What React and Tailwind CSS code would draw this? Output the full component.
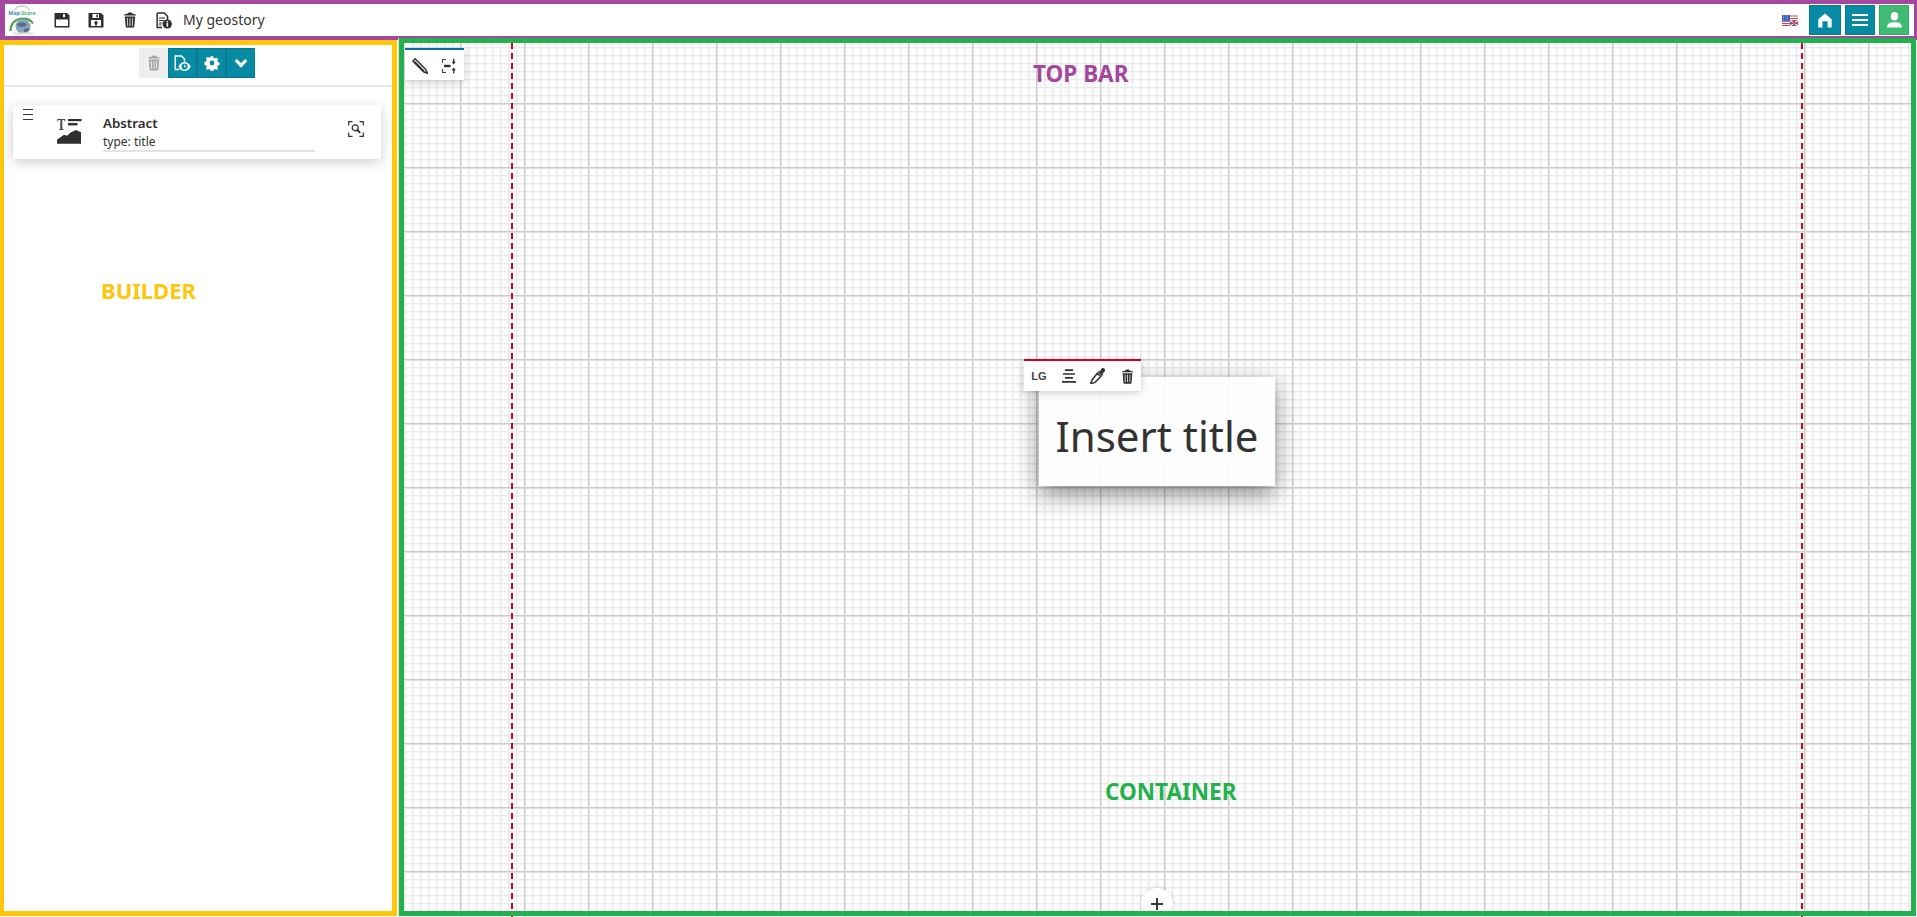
const D = "#2f2f2f";

const Save = ({ up }) => (
  <svg width="16" height="16" viewBox="0 0 16 16">
    <path d="M0.5 1h12.5l2.5 2.5V15.5H0.5z" fill={D} />
    {up ? (
      <>
        <rect x="3" y="8" width="10" height="6" fill="#fff" />
        <path d="M8 8.600l2.400 2.600H9v2.200H7v-2.200H5.600z" fill={D} />
        <rect x="4.500" y="2" width="6.500" height="4" fill="#fff" />
        <rect x="8.400" y="2.600" width="1.600" height="2.800" fill={D} />
      </>
    ) : (
      <>
        <rect x="2" y="7.500" width="12" height="6.500" fill="#fff" />
        <rect x="9" y="2.200" width="2" height="3" fill="#fff" />
      </>
    )}
  </svg>
);

const Trash = ({ color = D, size = 16 }) => (
  <svg width={size} height={size} viewBox="0 0 16 16">
    <path d="M5.600 1.800C5.800.7 6.400.4 8 .4s2.200.3 2.400 1.400l2.800.5c.5.1.7.5.7 1.200H2.100c0-.7.2-1.100.7-1.200z" fill={color} />
    <path d="M2.800 4.400h10.400l-.9 10.400c0 .5-.4.8-.9.8H4.600c-.5 0-.9-.3-.9-.8z" fill={color} />
    <path d="M5.300 6l.4 8M8 6v8M10.700 6l-.4 8" stroke="#fff" strokeWidth="1" opacity=".8" fill="none" />
  </svg>
);

const FileInfo = () => (
  <svg width="16" height="17" viewBox="0 0 16 17">
    <path d="M1.200 1h7l3.300 3.300V8M6 15.500H1.200V1" fill="none" stroke={D} strokeWidth="1.500" />
    <path d="M3 6h6M3 8.500h5M3 11h3.500M3 13h2.500" stroke={D} strokeWidth="1.100" />
    <circle cx="11.300" cy="12" r="4.600" fill={D} />
    <rect x="10.600" y="11" width="1.500" height="3.600" fill="#fff" />
    <rect x="10.600" y="9" width="1.500" height="1.400" fill="#fff" />
  </svg>
);

const FileEye = () => (
  <svg width="17" height="17" viewBox="0 0 17 17">
    <path d="M5.500 14.500H1.300V1h6.200l3 3v2.600" fill="none" stroke="#fff" strokeWidth="1.500" />
    <path d="M4.400 11.500C6 8.400 8.200 6.900 10.600 6.900s4.600 1.500 6.200 4.600c-1.600 3.100-3.800 4.600-6.200 4.600s-4.600-1.500-6.200-4.600z" fill="#fff" />
    <circle cx="10.600" cy="11.500" r="3.100" fill="#078aa3" />
    <path d="M10.600 9.800v1.900h1.700" stroke="#fff" strokeWidth="1" fill="none" />
  </svg>
);

const Gear = () => (
  <svg width="16" height="16" viewBox="0 0 16 16">
    <path d="M6.600.5h2.800l.4 2 1.300.6 1.800-1.100 2 2-1.100 1.800.6 1.300 2 .4v2.800l-2 .4-.6 1.300 1.100 1.800-2 2-1.800-1.100-1.300.6-.4 2H6.600l-.4-2-1.300-.6-1.800 1.100-2-2 1.100-1.800-.6-1.300-2-.4V6.600l2-.4.6-1.300L1.100 3.100l2-2 1.800 1.100 1.300-.6z" transform="translate(.8 .8) scale(.9)" fill="#fff" />
    <circle cx="8" cy="8" r="2.400" fill="#078aa3" />
  </svg>
);

const Chevron = () => (
  <svg width="14" height="14" viewBox="0 0 14 14">
    <path d="M1.800 4l5.200 5.400L12.200 4" fill="none" stroke="#fff" strokeWidth="3.200" />
  </svg>
);

const Home = () => (
  <svg width="14" height="15" viewBox="0 0 14 15">
    <path d="M7 .5l6.700 5.800v8.200H9.600V8.200H4.400v6.300H.3V6.300z" fill="#fff" />
  </svg>
);

const Menu = () => (
  <svg width="16" height="12" viewBox="0 0 16 12">
    <path d="M0 1h16M0 6h16M0 11h16" stroke="#fff" strokeWidth="2" />
  </svg>
);

const User = () => (
  <svg width="15" height="16" viewBox="0 0 15 16">
    <ellipse cx="7.500" cy="4.300" rx="3.700" ry="4.200" fill="#fff" />
    <path d="M0 15.500c0-3 2.200-5 5-5.200h5c2.800.2 5 2.200 5 5.200z" fill="#fff" />
  </svg>
);

const Flag = () => (
  <svg width="16" height="11" viewBox="0 0 16 11">
    <rect width="16" height="11" fill="#fff" />
    <path d="M0 1h16M0 3.500h16M0 6h16M0 8.500h16M0 10.500h16" stroke="#d8404a" strokeWidth="1" />
    <rect width="8" height="6.500" fill="#3558b0" />
    <path d="M1 1h6M1 3h6M1 5h6" stroke="#c8d4f0" strokeWidth=".8" strokeDasharray="1 1" />
    <rect x="8" y="5.500" width="8" height="5.500" fill="#2c4a9c" />
    <path d="M8 5.500l8 5.500M16 5.500l-8 5.500" stroke="#fff" strokeWidth="1.200" />
    <path d="M12 5.500V11M8 8.200h8" stroke="#d8404a" strokeWidth="1.200" />
  </svg>
);

const Logo = () => (
  <div className="relative w-[28px] h-[30px] shrink-0">
    <svg className="absolute inset-0" width="28" height="30" viewBox="0 0 28 30">
      <path d="M6 6C8 2.500 10 1 14 1s6 1.500 8 5" fill="none" stroke="#b5b5b5" strokeWidth="1" />
      <path d="M2.500 26C2.500 18 8 13.500 15 13.500c5 0 8 2 10 5" fill="none" stroke="#4aa24a" strokeWidth="2.200" />
      <circle cx="15" cy="21.500" r="7.500" fill="#8aa3b9" />
      <path d="M9 19c3-2 7-2 10 0-1 3-6 4-9 2zM16 24c2-1 4-1 6 0-1 2-3 3-6 3z" fill="#566f88" />
      <path d="M5 28.500h20" stroke="#dcdcdc" strokeWidth="2" />
    </svg>
    <span className="absolute left-0 top-[5px] w-[28px] flex justify-center gap-[1px] text-[5.5px] leading-[7px] font-bold whitespace-nowrap">
      <span className="text-[#3b8fc0]">Map</span>
      <span className="text-[#58b06a]">Store</span>
    </span>
  </div>
);

const TitleIcon = () => (
  <svg width="25" height="26" viewBox="0 0 25 26">
    <path d="M.3 1h8v2.600h-.5L7.200 2H5.300v8.800l1.300.4v.8H2v-.8l1.300-.4V2H1.400L.8 3.600H.3z" fill="#4a4a4a" />
    <rect x="11" y="1" width="13.500" height="2.200" fill={D} />
    <rect x="11" y="5" width="9.500" height="2.400" fill={D} />
    <path d="M0 25.700v-4l7-5 3 1 4-3.500 5-2.200 5 2.200v11.500z" fill={D} />
  </svg>
);

const Focus = () => (
  <svg width="16" height="16" viewBox="0 0 16 16" fill="none" stroke={D} strokeWidth="1.200">
    <path d="M.7 4.500V.7h3.800M11.500.7h3.800v3.800M.7 11.500v3.800h3.800M15.300 11.500v3.800h-3.800" />
    <circle cx="7.200" cy="6.800" r="3" />
    <path d="M9.400 9l2.800 2.800" strokeWidth="1.800" />
  </svg>
);

const Pencil = () => (
  <svg width="16" height="16" viewBox="0 0 15 15">
    <path d="M.8 3L3 .8l10 10 1.400 3.600-3.600-1.400z" fill="#fff" stroke={D} strokeWidth="1.300" strokeLinejoin="round" />
    <path d="M2.400 3.400l9.200 9.200" stroke={D} strokeWidth="1.400" />
    <path d="M12.200 12.200l2.200 2.200-2.600-.8z" fill={D} />
  </svg>
);

const Resize = () => (
  <svg width="15" height="16" viewBox="0 0 15 16">
    <path d="M5 1.500H1.500V5M1.500 11v3.500H5" fill="none" stroke="#444" strokeWidth="1.100" />
    <rect x="3" y="6.800" width="6.500" height="2.400" fill={D} />
    <path d="M12 .8h1.400v3h1.400L12.700 6.400 10.600 3.800H12zM12.700 9.600l2.100 2.600H13.400v3H12v-3H10.600z" fill={D} />
  </svg>
);

const AlignCenter = () => (
  <svg width="14" height="14" viewBox="0 0 14 14">
    <path d="M3 1.200h8M1 5h12M3 8.800h8M0 12.800h14" stroke={D} strokeWidth="1.700" />
  </svg>
);

const Dropper = () => (
  <svg width="16" height="16" viewBox="0 0 16 16">
    <path d="M11.300.8c1-1 2.400-.9 3.200 0 .8.900.8 2.100-.1 3l-2 2 .9 1-1.300 1.300-4.100-4.100 1.300-1.300 1 .9z" fill={D} />
    <path d="M7.400 5.200l3.400 3.400-5.800 5.800-2.100.7-1.300 1-1-1 .9-1.300.7-2.100z" fill="#fff" stroke={D} strokeWidth="1.500" />
  </svg>
);

const Plus = () => (
  <svg width="12" height="12" viewBox="0 0 12 12">
    <path d="M6 0v12M0 6h12" stroke="#3a3a3a" strokeWidth="2" />
  </svg>
);

const TealBtn = ({ children }) => (
  <div className="w-[29px] h-[30px] flex items-center justify-center bg-[#078aa3] border border-[#0a7a92]">{children}</div>
);

const TopIcon = ({ children }) => <div className="w-[34px] flex items-center justify-center">{children}</div>;

const GuideLine = ({ className }) => <div className={className}></div>;

export default function App() {
  return (
    <div className="h-screen w-full flex flex-col overflow-hidden bg-white text-[#333] font-['Noto_Sans',sans-serif]">
      <header className="h-10 shrink-0 flex items-center border-t-4 border-b-4 border-l-[5px] border-r-[3px] border-[#a4479f] bg-white">
        <div className="ml-[3px] mr-[9px]">
          <Logo />
        </div>
        <TopIcon><Save /></TopIcon>
        <TopIcon><Save up /></TopIcon>
        <TopIcon><Trash /></TopIcon>
        <TopIcon><FileInfo /></TopIcon>
        <span className="ml-[2px] -mt-px text-[14px] leading-none">My geostory</span>
        <div className="ml-auto flex items-center pr-[5px]">
          <div className="mr-[11px] flex"><Flag /></div>
          <div className="w-[32px] h-[30px] mr-[4px] flex items-center justify-center bg-[#078aa3] border border-[#0a7a92]"><Home /></div>
          <div className="w-[30px] h-[30px] mr-[4px] flex items-center justify-center bg-[#078aa3] border border-[#0a7a92]"><Menu /></div>
          <div className="w-[30px] h-[30px] flex items-center justify-center bg-[#3fbb74] border border-[#32a865]"><User /></div>
        </div>
      </header>

      <main className="flex-1 flex min-h-0 bg-white">
        <aside className="relative w-[397px] mb-px shrink-0 border-t-[5px] border-b-[5px] border-l-4 border-r-[5px] border-[#ffc60a] bg-white">
          <div className="h-[42px] flex justify-center items-start pt-[3px] pr-[2px] border-b-2 border-[#e6e6e6]">
            <div className="w-[29px] h-[30px] flex items-center justify-center bg-[#eeeeee]"><Trash color="#a3a3a3" /></div>
            <TealBtn><FileEye /></TealBtn>
            <TealBtn><Gear /></TealBtn>
            <TealBtn><Chevron /></TealBtn>
          </div>
          <div className="relative ml-[9px] mt-[18px] w-[368px] h-[54px] flex bg-white shadow-[0_3px_12px_rgba(0,0,0,0.2)]">
            <div className="absolute left-[10px] top-[4px] w-[10px] flex flex-col gap-[4px]">
              <div className="h-px bg-[#333]"></div>
              <div className="h-px bg-[#333]"></div>
              <div className="h-px bg-[#333]"></div>
            </div>
            <div className="ml-[44px] mt-[13px]"><TitleIcon /></div>
            <div className="ml-[21px] w-[212px] h-[47px] pt-[8px] border-b-2 border-[#e3e3e3]">
              <div className="text-[13.3px] leading-[20px] font-semibold text-[#2b2b2b]">Abstract</div>
              <div className="text-[12px] leading-[16px] mt-px">type: title</div>
            </div>
            <div className="ml-[33px] mt-[16px]"><Focus /></div>
          </div>
          <div className="absolute left-[97px] top-[230px] text-[22px] leading-[30px] font-bold text-[#ffc60a]">BUILDER</div>
        </aside>

        <section className="relative flex-1 ml-[2px] -mt-[2px] border-l border-[#dcdcdc] -translate-x-px overflow-hidden bg-white bg-[linear-gradient(to_right,#cccccc_1px,#e2e2e2_1px,#e2e2e2_2px,transparent_2px),linear-gradient(to_bottom,#cccccc_1px,#e2e2e2_1px,#e2e2e2_2px,transparent_2px),linear-gradient(to_right,#e8e8e8_1px,#f5f5f5_1px,#f5f5f5_2px,transparent_2px),linear-gradient(to_bottom,#e8e8e8_1px,#f5f5f5_1px,#f5f5f5_2px,transparent_2px)] bg-[size:64px_64px,64px_64px,8px_8px,8px_8px] bg-[position:61px_1px,61px_1px,5px_1px,5px_1px]">
          <GuideLine className="absolute left-[112px] top-[5px] bottom-0 w-[2px] bg-[repeating-linear-gradient(to_bottom,#d0021b_0,#d0021b_6px,transparent_6px,transparent_10px)]" />
          <GuideLine className="absolute left-[1402px] top-[5px] bottom-0 w-[2px] bg-[repeating-linear-gradient(to_bottom,#d0021b_0,#d0021b_6px,transparent_6px,transparent_10px)]" />

          <div className="absolute left-[6px] top-[10px] w-[59px] h-[32px] flex items-center pl-px pt-px bg-white border-t-2 border-[#0a6fa8] shadow-[0_2px_8px_rgba(0,0,0,0.2)]">
            <div className="w-[28px] flex justify-center"><Pencil /></div>
            <div className="w-[28px] flex justify-center"><Resize /></div>
          </div>

          <div className="absolute left-[634px] top-[21px] text-[22.5px] leading-[30px] font-bold text-[#a4479f] whitespace-nowrap">TOP BAR</div>

          <div className="absolute left-[640px] top-[339px] w-[236px] h-[109px] flex items-center justify-center bg-white/90 shadow-[0_8px_22px_rgba(0,0,0,0.45)]">
            <span className="text-[42px] leading-none pt-[8px] text-[#333] whitespace-nowrap">Insert title</span>
          </div>

          <div className="absolute left-[625px] top-[321px] w-[117px] h-[32px] flex items-center bg-white border-t-2 border-[#d0021b] shadow-[0_2px_8px_rgba(0,0,0,0.2)]">
            <span className="w-[30px] text-center text-[11px] font-bold text-[#444] font-['Liberation_Sans',sans-serif]">LG</span>
            <div className="w-[30px] flex justify-center"><AlignCenter /></div>
            <div className="w-[27px] flex justify-center"><Dropper /></div>
            <div className="w-[30px] flex justify-center pl-[2px]"><Trash size={15} /></div>
          </div>

          <div className="absolute left-[706px] top-[739px] text-[22.5px] leading-[30px] font-bold text-[#22b14c] whitespace-nowrap">CONTAINER</div>

          <div className="absolute left-[742px] top-[850px] w-[32px] h-[32px] rounded-full flex items-center justify-center bg-white shadow-[0_0_4px_rgba(0,0,0,0.15)]">
            <Plus />
          </div>

          <div className="absolute inset-x-0 top-0 bottom-px border-[5px] border-[#22b14c] pointer-events-none"></div>
        </section>
      </main>
    </div>
  );
}
